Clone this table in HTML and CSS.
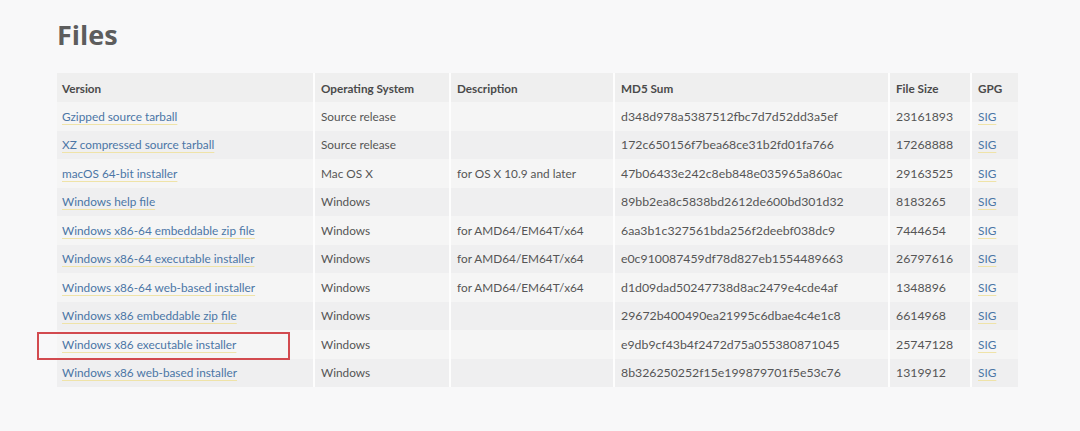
FILE: index.html
```html
<!DOCTYPE html>
<html lang="en">
<head>
<meta charset="utf-8">
<title>Files</title>
<link rel="stylesheet" href="styles.css">
</head>
<body>
<main class="page">
  <h1 class="title">Files</h1>
  <table class="files">
    <colgroup>
      <col class="c-ver"><col class="c-os"><col class="c-desc"><col class="c-md5"><col class="c-size"><col class="c-gpg">
    </colgroup>
    <thead>
      <tr>
        <th>Version</th>
        <th>Operating System</th>
        <th>Description</th>
        <th>MD5 Sum</th>
        <th>File Size</th>
        <th>GPG</th>
      </tr>
    </thead>
    <tbody>
      <tr><td><a href="#">Gzipped source tarball</a></td><td>Source release</td><td></td><td class="num">d348d978a5387512fbc7d7d52dd3a5ef</td><td class="num">23161893</td><td><a href="#">SIG</a></td></tr>
      <tr><td><a href="#">XZ compressed source tarball</a></td><td>Source release</td><td></td><td class="num">172c650156f7bea68ce31b2fd01fa766</td><td class="num">17268888</td><td><a href="#">SIG</a></td></tr>
      <tr><td><a href="#">macOS 64-bit installer</a></td><td>Mac OS X</td><td>for OS X 10.9 and later</td><td class="num">47b06433e242c8eb848e035965a860ac</td><td class="num">29163525</td><td><a href="#">SIG</a></td></tr>
      <tr><td><a href="#">Windows help file</a></td><td>Windows</td><td></td><td class="num">89bb2ea8c5838bd2612de600bd301d32</td><td class="num">8183265</td><td><a href="#">SIG</a></td></tr>
      <tr><td><a href="#">Windows x86-64 embeddable zip file</a></td><td>Windows</td><td>for AMD64/EM64T/x64</td><td class="num">6aa3b1c327561bda256f2deebf038dc9</td><td class="num">7444654</td><td><a href="#">SIG</a></td></tr>
      <tr><td><a href="#">Windows x86-64 executable installer</a></td><td>Windows</td><td>for AMD64/EM64T/x64</td><td class="num">e0c910087459df78d827eb1554489663</td><td class="num">26797616</td><td><a href="#">SIG</a></td></tr>
      <tr><td><a href="#">Windows x86-64 web-based installer</a></td><td>Windows</td><td>for AMD64/EM64T/x64</td><td class="num">d1d09dad50247738d8ac2479e4cde4af</td><td class="num">1348896</td><td><a href="#">SIG</a></td></tr>
      <tr><td><a href="#">Windows x86 embeddable zip file</a></td><td>Windows</td><td></td><td class="num">29672b400490ea21995c6dbae4c4e1c8</td><td class="num">6614968</td><td><a href="#">SIG</a></td></tr>
      <tr><td class="marked"><span class="highlight"></span><a href="#">Windows x86 executable installer</a></td><td>Windows</td><td></td><td class="num">e9db9cf43b4f2472d75a055380871045</td><td class="num">25747128</td><td><a href="#">SIG</a></td></tr>
      <tr><td><a href="#">Windows x86 web-based installer</a></td><td>Windows</td><td></td><td class="num">8b326250252f15e199879701f5e53c76</td><td class="num">1319912</td><td><a href="#">SIG</a></td></tr>
    </tbody>
  </table>
</main>
</body>
</html>
```

FILE: styles.css
```css
html, body {
  margin: 0;
  padding: 0;
  background: #f8f8f9;
}

body {
  font-family: "Lato", "Noto Sans", sans-serif;
  color: #555;
}

.page {
  padding: 17px 0 0 57px;
}

.title {
  margin: 0 0 20px 0;
  font-family: "Open Sans", "Noto Sans", sans-serif;
  font-size: 27px;
  font-weight: 700;
  line-height: 36px;
  color: #5d5d5d;
}

.files {
  border-collapse: collapse;
  table-layout: fixed;
  width: 961px;
  font-size: 11.8px;
}

.c-ver { width: 257px; }
.c-os { width: 136px; }
.c-desc { width: 164px; }
.c-md5 { width: 275px; }
.c-size { width: 82px; }
.c-gpg { width: 47px; }

.files th,
.files td {
  padding: 0 0 0 6px;
  text-align: left;
  vertical-align: middle;
  border-left: 2px solid #fdfdfd;
  white-space: nowrap;
  overflow: hidden;
}

.files th:first-child,
.files td:first-child {
  border-left: 0;
  padding-left: 5px;
}

.files th {
  height: 29px;
  font-size: 11.7px;
  font-weight: 700;
  color: #4a4a4a;
  background: #efefef;
}

.files tbody tr {
  height: 28.5px;
}

.files tbody tr:nth-child(odd) {
  background: #f5f5f5;
}

.files tbody tr:nth-child(even) {
  background: #efeff0;
}

.files .num {
  font-size: 12.3px;
}

.files a {
  color: #4b76a6;
  text-decoration: underline;
  text-decoration-color: #efe3a8;
  text-underline-offset: 3px;
}

.files td.marked {
  position: relative;
  overflow: visible;
}

.highlight {
  position: absolute;
  left: -20px;
  top: 2px;
  width: 249px;
  height: 24px;
  border: 2px solid #d24a4f;
}
```
